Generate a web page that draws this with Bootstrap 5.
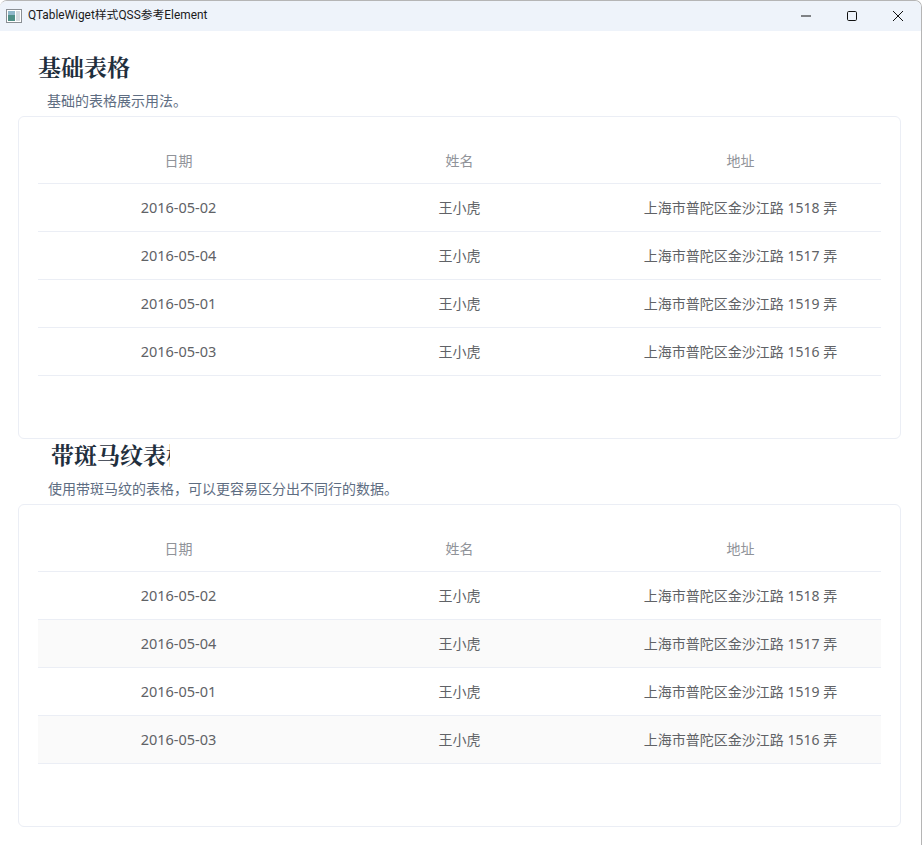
<!DOCTYPE html>
<html lang="zh">
<head>
<meta charset="utf-8">
<title>QTableWiget样式QSS参考Element</title>
<link href="https://cdn.jsdelivr.net/npm/bootstrap@5.3.0/dist/css/bootstrap.min.css" rel="stylesheet">
<style>
html,body{height:845px;overflow:hidden;background:#fff}
body{font-family:"Noto Sans","Noto Sans CJK SC",sans-serif}
.win-frame{width:922px;height:845px;background:#fff;border-top:1px solid #b5b5b5;border-right:1px solid #b5b5b5;border-top-left-radius:7px;border-top-right-radius:7px;overflow:hidden}
.title-bar{height:30px;background:#eef3fa;font-family:Roboto,"Noto Sans CJK SC",sans-serif;font-size:11.85px;color:#1a1a1a;padding-left:6px}
.app-ico{width:16px;height:16px;margin-right:6px}
.win-btns{margin-left:auto}
.win-btn{width:46px;height:30px}
.win-body{padding-top:24px}
.sec-title{font-family:"Liberation Serif","Noto Serif CJK SC","Noto Sans CJK SC",serif;font-weight:700;font-size:23px;line-height:27px;color:#1f2f3d;margin:0;overflow:hidden;white-space:nowrap}
.t-one{padding-left:38px}
.t-two{margin-left:51px;width:119px}
.sec-desc{font-size:14px;line-height:20px;color:#5e6d82;margin:0}
.d-one{padding:9px 0 0 47px;height:34px}
.d-two{padding:9px 0 0 48px;height:34px}
.tbl-card{margin-left:18px;width:883px;height:323px;border:1px solid #ebeef5;border-radius:6px;padding:22px 19px 0;background:#fff}
.gap-mid{height:4px}
.data-table{width:843px;margin:0;table-layout:fixed;border-collapse:collapse;font-size:14px;color:#606266;--bs-table-bg:transparent}
.data-table th,.data-table td{text-align:center;vertical-align:middle;height:48px;padding:0;border-bottom:1px solid #ebeef5;font-weight:400;box-shadow:none}
.data-table th{height:44px;color:#909399}
.data-table td.date-cell{font-size:14.5px;padding-top:2px}
.stripe-row td{background:#fafafa}
</style>
</head>
<body class="m-0">
<div class="win-frame d-flex flex-column">
  <div class="title-bar d-flex align-items-center flex-shrink-0">
    <svg class="app-ico" viewBox="0 0 16 16"><rect x=".5" y="1.5" width="15" height="13" fill="#fff" stroke="#8a8f94"/><rect x="2" y="3" width="7" height="10" fill="#4f8f86"/><rect x="2" y="3" width="7" height="4" fill="#8fb7c9"/><rect x="10" y="3" width="4" height="10" fill="#d5dadf"/></svg>
    <span>QTableWiget样式QSS参考Element</span>
    <div class="win-btns d-flex">
      <div class="win-btn d-flex align-items-center justify-content-center"><svg width="12" height="12" viewBox="0 0 12 12"><path d="M1 6h10" stroke="#111" fill="none"/></svg></div>
      <div class="win-btn d-flex align-items-center justify-content-center"><svg width="12" height="12" viewBox="0 0 12 12"><rect x="1.5" y="1.5" width="9" height="9" rx="1.2" stroke="#111" fill="none"/></svg></div>
      <div class="win-btn d-flex align-items-center justify-content-center"><svg width="12" height="12" viewBox="0 0 12 12"><path d="M1 1l10 10M11 1L1 11" stroke="#111" fill="none"/></svg></div>
    </div>
  </div>
  <div class="win-body">
    <h2 class="sec-title t-one">基础表格</h2>
    <p class="sec-desc d-one">基础的表格展示用法。</p>
    <div class="tbl-card">
      <table class="table data-table">
        <thead><tr><th>日期</th><th>姓名</th><th>地址</th></tr></thead>
        <tbody>
          <tr><td class="date-cell">2016-05-02</td><td>王小虎</td><td>上海市普陀区金沙江路 1518 弄</td></tr>
          <tr><td class="date-cell">2016-05-04</td><td>王小虎</td><td>上海市普陀区金沙江路 1517 弄</td></tr>
          <tr><td class="date-cell">2016-05-01</td><td>王小虎</td><td>上海市普陀区金沙江路 1519 弄</td></tr>
          <tr><td class="date-cell">2016-05-03</td><td>王小虎</td><td>上海市普陀区金沙江路 1516 弄</td></tr>
        </tbody>
      </table>
    </div>
    <div class="gap-mid"></div>
    <h2 class="sec-title t-two">带斑马纹表格</h2>
    <p class="sec-desc d-two">使用带斑马纹的表格，可以更容易区分出不同行的数据。</p>
    <div class="tbl-card">
      <table class="table data-table">
        <thead><tr><th>日期</th><th>姓名</th><th>地址</th></tr></thead>
        <tbody>
          <tr><td class="date-cell">2016-05-02</td><td>王小虎</td><td>上海市普陀区金沙江路 1518 弄</td></tr>
          <tr class="stripe-row"><td class="date-cell">2016-05-04</td><td>王小虎</td><td>上海市普陀区金沙江路 1517 弄</td></tr>
          <tr><td class="date-cell">2016-05-01</td><td>王小虎</td><td>上海市普陀区金沙江路 1519 弄</td></tr>
          <tr class="stripe-row"><td class="date-cell">2016-05-03</td><td>王小虎</td><td>上海市普陀区金沙江路 1516 弄</td></tr>
        </tbody>
      </table>
    </div>
  </div>
</div>
<script src="https://cdn.jsdelivr.net/npm/bootstrap@5.3.0/dist/js/bootstrap.bundle.min.js"></script>
</body>
</html>
